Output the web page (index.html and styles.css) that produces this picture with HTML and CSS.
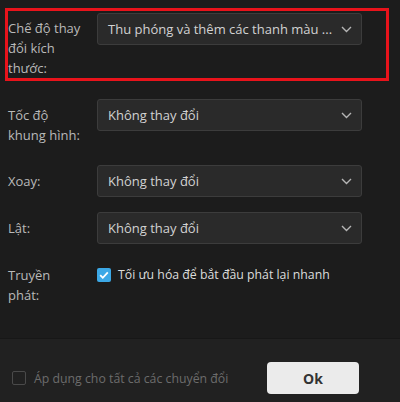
FILE: index.html
```html
<!DOCTYPE html>
<html lang="vi">
<head>
    <meta charset="UTF-8">
    <meta name="viewport" content="width=device-width, initial-scale=1.0">
    <title>Cài đặt chuyển đổi</title>
    <link rel="stylesheet" href="styles.css">
</head>
<body>
    <div class="dialog">
        <div class="settings">
            <div class="highlight">
                <div class="row first">
                    <div class="label">Chế độ thay đổi kích thước:</div>
                    <div class="dropdown">
                        <span>Thu phóng và thêm các thanh màu ...</span>
                        <svg class="chevron" width="11" height="7" viewBox="0 0 11 7"><path d="M1 1l4.5 4.5L10 1" fill="none" stroke="#b5b5b5" stroke-width="1.4"/></svg>
                    </div>
                </div>
            </div>
            <div class="row">
                <div class="label">Tốc độ khung hình:</div>
                <div class="dropdown">
                    <span>Không thay đổi</span>
                    <svg class="chevron" width="11" height="7" viewBox="0 0 11 7"><path d="M1 1l4.5 4.5L10 1" fill="none" stroke="#b5b5b5" stroke-width="1.4"/></svg>
                </div>
            </div>
            <div class="row">
                <div class="label">Xoay:</div>
                <div class="dropdown">
                    <span>Không thay đổi</span>
                    <svg class="chevron" width="11" height="7" viewBox="0 0 11 7"><path d="M1 1l4.5 4.5L10 1" fill="none" stroke="#b5b5b5" stroke-width="1.4"/></svg>
                </div>
            </div>
            <div class="row">
                <div class="label">Lật:</div>
                <div class="dropdown">
                    <span>Không thay đổi</span>
                    <svg class="chevron" width="11" height="7" viewBox="0 0 11 7"><path d="M1 1l4.5 4.5L10 1" fill="none" stroke="#b5b5b5" stroke-width="1.4"/></svg>
                </div>
            </div>
            <div class="row">
                <div class="label">Truyền phát:</div>
                <div class="option">
                    <span class="checkbox checked">
                        <svg width="14" height="14" viewBox="0 0 14 14"><path d="M3.2 7.2l2.6 2.6 5-5.4" fill="none" stroke="#fff" stroke-width="1.8"/></svg>
                    </span>
                    <span>Tối ưu hóa để bắt đầu phát lại nhanh</span>
                </div>
            </div>
        </div>
        <div class="footer">
            <div class="apply-all">
                <span class="checkbox"></span>
                <span>Áp dụng cho tất cả các chuyển đổi</span>
            </div>
            <button class="ok-button">Ok</button>
        </div>
    </div>
</body>
</html>
```

FILE: styles.css
```css
body {
    margin: 0;
    background-color: #1c1c1c;
    font-family: "Open Sans", "Noto Sans", sans-serif;
    font-size: 13px;
    color: #b9b9b9;
}
.dialog {
    width: 400px;
    height: 402px;
    display: flex;
    flex-direction: column;
}
.settings {
    flex: 1;
    padding-top: 8px;
}
.highlight {
    margin: 0 11px 18px 5px;
    border: 3px solid #e8131b;
    padding-top: 2px;
}
.row {
    display: grid;
    grid-template-columns: 97px 265px;
    align-items: start;
    margin-bottom: 15px;
}
.highlight .row {
    margin-bottom: 0;
    grid-template-columns: 89px 265px;
}
.label {
    padding: 6px 0 5px 8px;
    line-height: 20px;
    width: 74px;
}
.first .label {
    padding: 5px 0 0 0;
}
.dropdown {
    height: 32px;
    box-sizing: border-box;
    display: flex;
    align-items: center;
    justify-content: space-between;
    padding: 0 9px 0 10px;
    background-color: #2a2a2a;
    border: 1px solid #3c3c3c;
    border-radius: 3px;
    color: #d2d2d2;
}
.chevron {
    margin-top: 1px;
}
.option {
    display: flex;
    align-items: center;
    gap: 7px;
    padding-top: 6px;
    line-height: 20px;
    font-size: 12.3px;
    color: #dcdcdc;
}
.checkbox {
    width: 14px;
    height: 14px;
    box-sizing: border-box;
    border: 1px solid #4a4a4a;
    border-radius: 2px;
    display: inline-block;
    flex: none;
}
.checkbox.checked {
    border: none;
    background-color: #3ca8e6;
}
.checkbox svg {
    display: block;
}
.footer {
    height: 64px;
    box-sizing: border-box;
    background-color: #212121;
    border-top: 1px solid #171717;
    display: flex;
    align-items: center;
    justify-content: space-between;
    padding: 23px 41px 8px 12px;
}
.apply-all {
    display: flex;
    align-items: center;
    gap: 8px;
    font-size: 12.3px;
    color: #6c6c6c;
}
.ok-button {
    width: 92px;
    height: 32px;
    border: none;
    border-radius: 4px;
    background-color: #ebebeb;
    color: #333;
    font-family: "Open Sans", "Noto Sans", sans-serif;
    font-size: 14px;
    font-weight: bold;
}
```
